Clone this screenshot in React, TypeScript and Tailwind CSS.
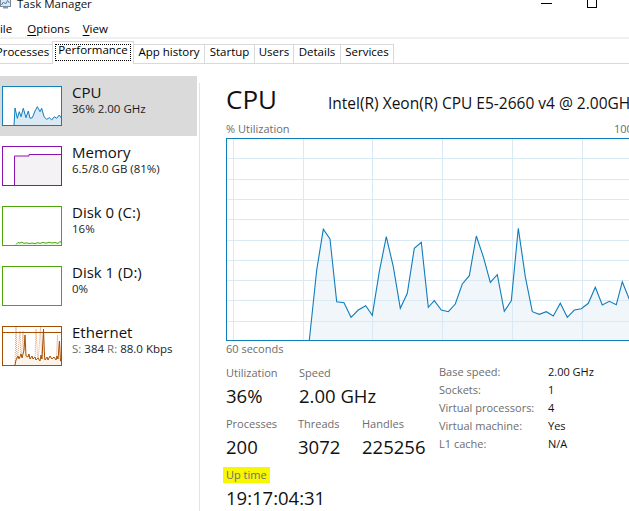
import React from "react";

// CPU utilisation samples, in graph coordinates (420 x 203 box)
const cpuPoints: [number, number][] = [
  [83.3, 202.5], [90.7, 132], [97.3, 91.3], [104, 101], [110.7, 163.7], [118, 164.7],
  [125, 179.3], [132.3, 172], [139.7, 167.7], [146.3, 177.3], [153.3, 133.7], [160.3, 98.7],
  [167.3, 128.7], [174.3, 170.3], [181.3, 155.3], [188.3, 110.3], [195.3, 104.3], [202.3, 169.3],
  [208.3, 162.7], [215.3, 172], [222.3, 173.7], [229.3, 166], [236.3, 146], [243.3, 137.7],
  [250.3, 98], [257.3, 118.7], [264.3, 144.3], [271.3, 136.7], [278.3, 173.3], [285.3, 162.7],
  [292.3, 90.3], [299.3, 138.7], [306.3, 173.7], [313.3, 176.3], [320.3, 173.7], [327.3, 178],
  [334.3, 165.3], [341.3, 179.3], [348.3, 172], [355.3, 170.7], [362.3, 165.3], [369.3, 149.3],
  [376.3, 167], [383.3, 163.3], [390.3, 166.7], [396.3, 143.7], [403.3, 161.3], [410.3, 150],
  [419, 158],
];

const toPts = (p: [number, number][]) => p.map(([x, y]) => `${x},${y}`).join(" ");

function CpuGraph() {
  const W = 420;
  const H = 203;
  const line = toPts(cpuPoints);
  const area = `${cpuPoints[0][0]},${H} ${line} ${W},${H}`;
  const rows = [1, 2, 3, 4, 5, 6, 7, 8, 9].map((i) => Math.round((H * i) / 10) + 0.5);
  const cols = [0, 1, 2, 3, 4, 5].map((i) => Math.round(7 + 69.7 * i) + 0.5);
  return (
    <svg width={W} height={H} className="block shrink-0">
      <rect x={0} y={0} width={W} height={H} fill="#ffffff" />
      <polygon points={area} fill="#f1f6fa" />
      {rows.map((y) => (
        <line key={"r" + y} x1={0} x2={W} y1={y} y2={y} stroke="#d9eaf4" />
      ))}
      {cols.map((x) => (
        <line key={"c" + x} x1={x} x2={x} y1={0} y2={H} stroke="#d9eaf4" />
      ))}
      <polyline points={line} fill="none" stroke="#117dbb" strokeWidth={1.1} />
      <rect x={0.5} y={0.5} width={W - 1} height={H - 1} fill="none" stroke="#117dbb" />
    </svg>
  );
}

const cpuThumb: [number, number][] = [
  [12, 39.5], [13, 22], [15.3, 32.3], [17.3, 25.7], [19, 30.7], [21.3, 22.3], [24, 31.7],
  [26.3, 25], [28, 32.3], [30.3, 31.7], [33, 25], [35.3, 20.7], [38, 25.7], [39.7, 22.3],
  [42, 30.7], [44.7, 33.3], [47.3, 31.7], [49.7, 34], [52.3, 30.7], [54.7, 32.3], [57.3, 29],
  [59.5, 32.3],
];

function CpuThumb() {
  const line = toPts(cpuThumb);
  return (
    <svg width={60} height={40} className="block">
      <rect x={0} y={0} width={60} height={40} fill="#ffffff" />
      <polygon points={`12,40 ${line} 60,40`} fill="#d9eaf4" />
      <polyline points={line} fill="none" stroke="#117dbb" />
      <rect x={0.5} y={0.5} width={59} height={39} fill="none" stroke="#117dbb" />
    </svg>
  );
}

function MemoryThumb() {
  return (
    <svg width={60} height={40} className="block">
      <rect x={0} y={0} width={60} height={40} fill="#ffffff" />
      <polygon points="12.5,40 12.5,10 27,10 27,8.5 60,8.5 60,40" fill="#f4f2f4" />
      <polyline points="12.5,40 12.5,10 27,10 27,8.5 60,8.5" fill="none" stroke="#8b12ae" />
      <rect x={0.5} y={0.5} width={59} height={39} fill="none" stroke="#8b12ae" />
    </svg>
  );
}

function DiskThumb({ active }: { active?: boolean }) {
  const pts =
    "14,38.5 16,36.5 18,37 20,36 22,37.5 24,36.8 27,37.5 30,37 33,37.6 36,36.6 38,37.4 41,36.4 44,37.2 47,36.2 50,37 53,36.5 56,37.4 58,35.5 60,37";
  return (
    <svg width={60} height={40} className="block">
      <rect x={0} y={0} width={60} height={40} fill="#ffffff" />
      {active && (
        <>
          <polygon points={`14,40 ${pts} 60,40`} fill="#effae7" />
          <polyline points={pts} fill="none" stroke="#4da60c" />
        </>
      )}
      <rect x={0.5} y={0.5} width={59} height={39} fill="none" stroke="#4da60c" />
    </svg>
  );
}

function EthernetThumb() {
  const send =
    "13,39 14,1 15,38 18,5 19,38 21,5 22,38 33,38 34,3 36,38 38.5,1 40,38 54,38 55.5,9 57,38 60,38";
  const recv =
    "13,39 14,34 16,30 17,33 19,28 20,32 22,24 23,9 24,30 26,31 27,28 28,33 30,30 31,33 33,31 34,34 36,32 38,35 39,29 40,33 41.5,3 42.5,30 43,34 45,31 46,34 48,30 50,33 52,31 54,34 55,30 56,33 57.5,15 58.5,35 60,34";
  return (
    <svg width={60} height={40} className="block">
      <rect x={0} y={0} width={60} height={40} fill="#ffffff" />
      <polyline points={send} fill="none" stroke="#e0a47a" strokeDasharray="1 1" />
      <line x1={0} x2={60} y1={6.5} y2={6.5} stroke="#a74f01" />
      <polygon points={`13,40 ${recv} 60,40`} fill="#fcf3eb" />
      <polyline points={recv} fill="none" stroke="#a74f01" />
      <rect x={0.5} y={0.5} width={59} height={39} fill="none" stroke="#a74f01" />
    </svg>
  );
}

function AppIcon() {
  return (
    <svg width={11} height={9} className="block">
      <rect x={0.5} y={-2} width={10} height={8.5} fill="#dbe8f2" stroke="#7d8a96" />
      <polyline points="1.5,5 3.5,2 5.5,4 7.5,0.5 9.5,3" fill="none" stroke="#3a7fb8" />
      <rect x={3} y={7} width={5} height={1.5} fill="#8a96a2" />
    </svg>
  );
}

type Item = {
  name: string;
  sub: React.ReactNode;
  thumb: React.ReactNode;
  selected?: boolean;
};

const items: Item[] = [
  { name: "CPU", sub: "36% 2.00 GHz", thumb: <CpuThumb />, selected: true },
  { name: "Memory", sub: "6.5/8.0 GB (81%)", thumb: <MemoryThumb /> },
  { name: "Disk 0 (C:)", sub: "16%", thumb: <DiskThumb active /> },
  { name: "Disk 1 (D:)", sub: "0%", thumb: <DiskThumb /> },
  {
    name: "Ethernet",
    sub: (
      <>
        <span className="text-[#6d6d6d]">S:</span> 384 <span className="text-[#6d6d6d]">R:</span> 88.0 Kbps
      </>
    ),
    thumb: <EthernetThumb />,
  },
];

const tabs = [
  { label: "Processes", w: "w-[60px]" },
  { label: "Performance", w: "w-[82px]", selected: true },
  { label: "App history", w: "w-[71px]" },
  { label: "Startup", w: "w-[50px]" },
  { label: "Users", w: "w-[39px]" },
  { label: "Details", w: "w-[47px]" },
  { label: "Services", w: "w-[53px]" },
];

function Label({ children }: { children: React.ReactNode }) {
  return <div className="h-[16px] text-[11px] leading-[16px] text-[#6d6d6d] whitespace-nowrap">{children}</div>;
}

function Value({ children }: { children: React.ReactNode }) {
  return <div className="mt-[3px] h-[24px] text-[18.5px] leading-[24px] text-[#111] whitespace-nowrap">{children}</div>;
}

export default function App() {
  return (
    <div className="w-[629px] h-[511px] overflow-hidden bg-white text-black font-['Open_Sans','Noto_Sans',sans-serif] flex flex-col">
      {/* title bar */}
      <div className="h-[20px] flex items-start shrink-0">
        <AppIcon />
        <span className="ml-[6px] -mt-[4px] text-[11.5px] leading-[16px] text-[#111]">Task Manager</span>
        <div className="ml-auto mr-[32px] flex items-start">
          <div className="mt-[3px] w-[11px] h-px bg-black" />
          <div className="ml-[35px] -mt-[3px] w-[10px] h-[11px] border border-black" />
        </div>
      </div>

      {/* menu */}
      <div className="h-[17px] flex text-[11.5px] leading-[16px] shrink-0 pt-px">
        <span className="-ml-[6px]">
          <span className="underline underline-offset-2">F</span>ile
        </span>
        <span className="ml-[15px]">
          <span className="underline underline-offset-2">O</span>ptions
        </span>
        <span className="ml-[13px]">
          <span className="underline underline-offset-2">V</span>iew
        </span>
      </div>
      <div className="h-[2px] bg-[#f0f0f0] shrink-0" />

      {/* tabs */}
      <div className="h-[25px] border-b border-[#d9d9d9] flex items-end shrink-0 -ml-[7px] text-[11.5px]">
        {tabs.map((t) =>
          t.selected ? (
            <div
              key={t.label}
              className={`${t.w} -ml-px h-[23px] -mb-px relative z-10 bg-white border-t border-l border-r border-[#d9d9d9] px-[2px] pt-[2px]`}
            >
              <div className="h-[17px] border border-dotted border-black flex justify-center">
                <span className="-mt-px leading-none">{t.label}</span>
              </div>
            </div>
          ) : (
            <div
              key={t.label}
              className={`${t.w} h-[19px] border-t border-r border-[#d9d9d9] bg-white flex justify-center pt-px`}
            >
              <span className="leading-none">{t.label}</span>
            </div>
          )
        )}
      </div>

      {/* body */}
      <div className="flex flex-1 min-h-0">
        {/* sidebar */}
        <div className="w-[200px] shrink-0 flex">
          <div className="w-[197px] pt-[12px] flex flex-col">
            {items.map((it) => (
              <div key={it.name} className={`h-[60px] flex ${it.selected ? "bg-[#dadada]" : ""}`}>
                <div className="ml-[2px] mt-[10px]">{it.thumb}</div>
                <div className="ml-[10px] pt-[6px] flex flex-col whitespace-nowrap">
                  <div className="text-[15px] leading-[20px] text-[#111]">{it.name}</div>
                  <div className="-mt-px text-[11.5px] leading-[16px] text-[#1b1b1b]">{it.sub}</div>
                </div>
              </div>
            ))}
          </div>
          <div className="ml-[2px] mt-[19px] w-px bg-[#e3e3e3]" />
        </div>

        {/* main */}
        <div className="flex-1 min-w-0 pl-[26px] pt-[19px] flex flex-col">
          <div className="h-[32px] flex items-baseline whitespace-nowrap">
            <span className="w-[102px] shrink-0 text-[26px] leading-[32px] text-[#111]">CPU</span>
            <span className="text-[15.5px] leading-[32px] text-[#111]">Intel(R) Xeon(R) CPU E5-2660 v4 @ 2.00GHz</span>
          </div>

          <div className="mt-[6px] w-[416px] shrink-0 flex justify-between h-[16px] text-[11px] leading-[16px] text-[#6d6d6d]">
            <span>% Utilization</span>
            <span>100%</span>
          </div>

          <div className="mt-px">
            <CpuGraph />
          </div>

          <Label>60 seconds</Label>

          <div className="mt-[8px] flex items-start">
            <div className="w-[213px] shrink-0 flex flex-col gap-[8px]">
              <div className="flex">
                <div className="w-[73px]">
                  <Label>Utilization</Label>
                  <Value>36%</Value>
                </div>
                <div>
                  <Label>Speed</Label>
                  <Value>2.00 GHz</Value>
                </div>
              </div>
              <div className="flex">
                <div className="w-[72px]">
                  <Label>Processes</Label>
                  <Value>200</Value>
                </div>
                <div className="w-[64px]">
                  <Label>Threads</Label>
                  <Value>3072</Value>
                </div>
                <div>
                  <Label>Handles</Label>
                  <Value>225256</Value>
                </div>
              </div>
              <div>
                <div className="flex">
                  <span className="-ml-[3px] px-[3px] bg-[#f7f700] h-[16px] text-[11px] leading-[16px] text-[#6d6d6d]">
                    Up time
                  </span>
                </div>
                <Value>19:17:04:31</Value>
              </div>
            </div>

            <div className="-mt-[2px] self-start grid grid-cols-[109px_auto] auto-rows-[18px] text-[11px] leading-[18px] whitespace-nowrap">
              <span className="text-[#6d6d6d]">Base speed:</span>
              <span className="text-[#111]">2.00 GHz</span>
              <span className="text-[#6d6d6d]">Sockets:</span>
              <span className="text-[#111]">1</span>
              <span className="text-[#6d6d6d]">Virtual processors:</span>
              <span className="text-[#111]">4</span>
              <span className="text-[#6d6d6d]">Virtual machine:</span>
              <span className="text-[#111]">Yes</span>
              <span className="text-[#6d6d6d]">L1 cache:</span>
              <span className="text-[#111]">N/A</span>
            </div>
          </div>
        </div>
      </div>
    </div>
  );
}
